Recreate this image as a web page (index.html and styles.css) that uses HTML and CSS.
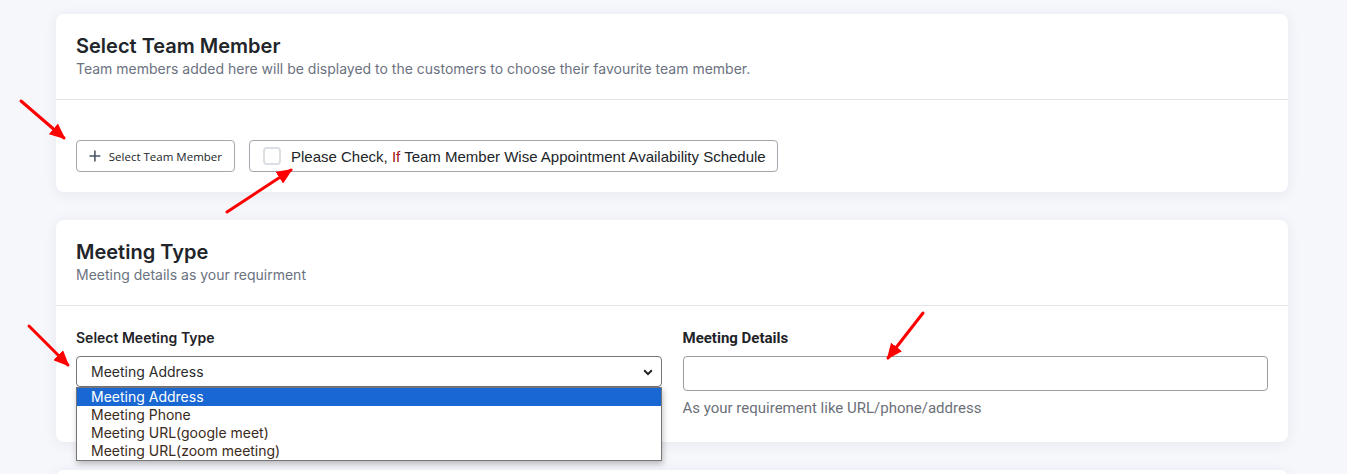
FILE: index.html
```html
<!DOCTYPE html>
<html lang="en">
<head>
    <meta charset="UTF-8">
    <meta name="viewport" content="width=device-width, initial-scale=1.0">
    <title>Service Settings</title>
    <link rel="stylesheet" href="styles.css">
</head>
<body>
    <div class="page">
        <div class="card">
            <div class="card-header">
                <h2 class="card-title">Select Team Member</h2>
                <p class="card-subtitle">Team members added here will be displayed to the customers to choose their favourite team member.</p>
            </div>
            <div class="card-body team-body">
                <button class="outline-btn add-btn">
                    <svg width="12" height="12" viewBox="0 0 12 12"><path d="M6 0.5v11M0.5 6h11" stroke="#4b5563" stroke-width="1.6" fill="none"/></svg>
                    <span>Select Team Member</span>
                </button>
                <label class="outline-btn check-btn">
                    <span class="checkbox"></span>
                    <span>Please Check, <span class="warn">If</span> Team Member Wise Appointment Availability Schedule</span>
                </label>
            </div>
        </div>

        <div class="card">
            <div class="card-header">
                <h2 class="card-title">Meeting Type</h2>
                <p class="card-subtitle">Meeting details as your requirment</p>
            </div>
            <div class="card-body meeting-body">
                <div class="field">
                    <div class="field-label">Select Meeting Type</div>
                    <div class="select-wrap">
                        <div class="select-box">
                            <span>Meeting Address</span>
                            <svg class="chevron" width="10" height="7" viewBox="0 0 10 7"><path d="M1.2 1.3L5 5.1l3.8-3.8" stroke="#222" stroke-width="2" fill="none"/></svg>
                        </div>
                        <ul class="select-menu">
                            <li class="active">Meeting Address</li>
                            <li>Meeting Phone</li>
                            <li>Meeting URL(google meet)</li>
                            <li>Meeting URL(zoom meeting)</li>
                        </ul>
                    </div>
                </div>
                <div class="field details">
                    <div class="field-label">Meeting Details</div>
                    <input class="text-input" type="text">
                    <div class="field-help">As your requirement like URL/phone/address</div>
                </div>
            </div>
        </div>

        <div class="card card-next"></div>
    </div>

    <!-- annotation arrows -->
    <svg class="arrows" width="1347" height="474" viewBox="0 0 1347 474">
        <defs>
            <marker id="head" markerUnits="userSpaceOnUse" markerWidth="16" markerHeight="14" refX="14" refY="7" orient="auto">
                <path d="M0 0L16 7L0 14z" fill="#f00"/>
            </marker>
        </defs>
        <g stroke="#f00" stroke-width="3" stroke-linecap="round">
            <line x1="21" y1="101" x2="64" y2="138" marker-end="url(#head)"/>
            <line x1="227" y1="212" x2="291" y2="170" marker-end="url(#head)"/>
            <line x1="29" y1="326" x2="68" y2="365" marker-end="url(#head)"/>
            <line x1="923" y1="313" x2="888" y2="358" marker-end="url(#head)"/>
        </g>
    </svg>
</body>
</html>
```

FILE: styles.css
```css
* {
    margin: 0;
    padding: 0;
    box-sizing: border-box;
}

body {
    background-color: #f6f7fb;
    font-family: Inter, "Noto Sans", sans-serif;
    color: #1f2328;
    overflow: hidden;
    height: 474px;
}

.page {
    padding: 14px 59px 0 56px;
    display: flex;
    flex-direction: column;
    gap: 28px;
}

.card {
    background: #fff;
    border-radius: 8px;
    box-shadow: 0 2px 14px rgba(30, 40, 80, 0.07);
}

.card-header {
    padding: 20px 20px 21px;
    border-bottom: 1px solid #e3e5e8;
}

.card-title {
    font-size: 20px;
    font-weight: 600;
    line-height: 24px;
    color: #212529;
}

.card-subtitle {
    font-size: 14px;
    line-height: 19px;
    color: #6b7280;
    margin-top: 1px;
}

.card-body {
    padding: 20px;
}

.team-body {
    display: flex;
    gap: 14px;
    padding-top: 40px;
}

.outline-btn {
    display: flex;
    align-items: center;
    height: 32px;
    background: #fff;
    border: 1px solid #a3a7ad;
    border-radius: 4px;
    color: #212529;
    white-space: nowrap;
}

.add-btn {
    font-family: "Open Sans", sans-serif;
    font-size: 11.5px;
    padding: 0 12px;
    gap: 8px;
    width: 159px;
}

.check-btn {
    font-family: "Liberation Sans", Arial, sans-serif;
    font-size: 15px;
    padding: 0 12px 0 13px;
    gap: 10px;
    width: 529px;
}

.checkbox {
    flex: none;
    width: 18px;
    height: 18px;
    border: 2px solid #dcdfe3;
    border-radius: 4px;
}

.warn {
    color: #a30f0f;
}

.meeting-body {
    display: grid;
    grid-template-columns: 1fr 1fr;
    gap: 21px;
    padding-top: 23px;
    padding-bottom: 25px;
}

.field-label {
    font-size: 14px;
    font-weight: 600;
    line-height: 18px;
    margin-bottom: 9px;
}

.select-wrap {
    position: relative;
}

.select-box {
    display: flex;
    align-items: center;
    justify-content: space-between;
    height: 31px;
    border: 1px solid #767676;
    border-radius: 4px;
    padding: 0 8px 0 14px;
    font-size: 14px;
    color: #2b2b2b;
}

.chevron {
    margin-top: 1px;
}

.select-menu {
    position: absolute;
    top: 31px;
    left: 0;
    width: 586px;
    list-style: none;
    background: #fff;
    border: 1px solid #767676;
    box-shadow: 1px 3px 6px rgba(0, 0, 0, 0.25);
    z-index: 5;
}

.select-menu li {
    height: 18px;
    line-height: 18px;
    padding-left: 14px;
    font-size: 14px;
    color: #3a2a20;
}

.select-menu li.active {
    background: #1967d2;
    color: #fff;
}

.details {
    font-family: Roboto, sans-serif;
}

.details .field-label {
    font-size: 15px;
    font-weight: 700;
}

.text-input {
    display: block;
    width: 100%;
    height: 35px;
    border: 1px solid #9a9da2;
    border-radius: 4px;
    background: #fff;
}

.field-help {
    font-size: 15px;
    line-height: 18px;
    color: #6c7079;
    margin-top: 8px;
}

.card-next {
    height: 40px;
}

.arrows {
    position: absolute;
    top: 0;
    left: 0;
    z-index: 10;
    pointer-events: none;
}
```
